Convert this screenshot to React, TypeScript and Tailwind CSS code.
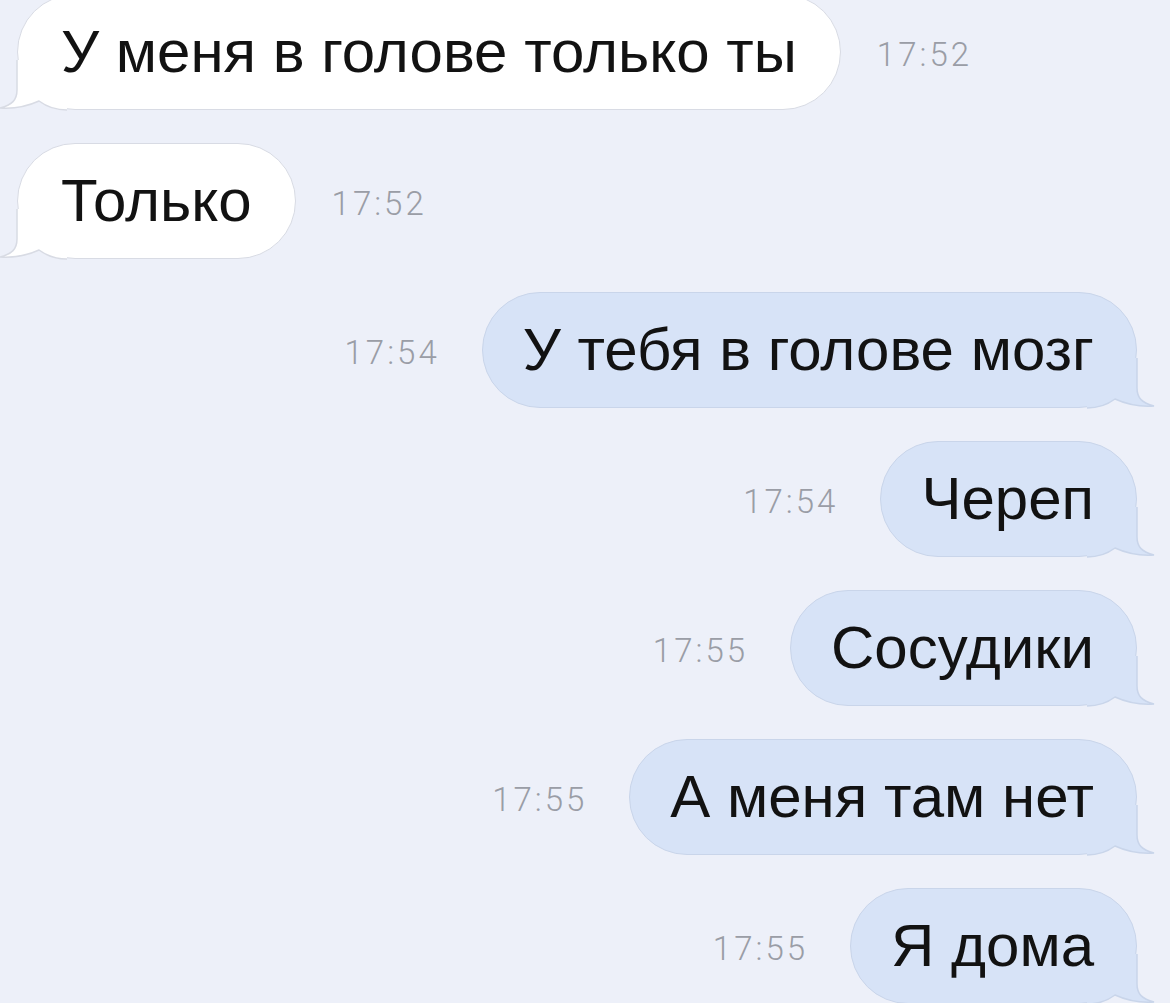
import React from "react";

type Side = "in" | "out";

interface Msg {
	side: Side;
	text: string;
	time: string;
}

const messages: Msg[] = [
	{ side: "in", text: "У меня в голове только ты", time: "17:52" },
	{ side: "in", text: "Только", time: "17:52" },
	{ side: "out", text: "У тебя в голове мозг", time: "17:54" },
	{ side: "out", text: "Череп", time: "17:54" },
	{ side: "out", text: "Сосудики", time: "17:55" },
	{ side: "out", text: "А меня там нет", time: "17:55" },
	{ side: "out", text: "Я дома", time: "17:55" },
];

export default function App() {
	return (
		<div className="h-[1003px] overflow-hidden bg-[#edf0f9] font-['Liberation_Sans',Arial,sans-serif]">
			<div className="-mt-[6px] flex flex-col gap-[33px] pl-[17px] pr-[33px]">
				{messages.map((m, i) => (
					<Row key={i} msg={m} />
				))}
			</div>
		</div>
	);
}

function Row({ msg }: Readonly<{ msg: Msg }>) {
	if (msg.side === "in") {
		return (
			<div className="flex items-center gap-[36px]">
				<Bubble side="in" text={msg.text} />
				<Time value={msg.time} />
			</div>
		);
	}
	return (
		<div className="flex items-center justify-end gap-[42px]">
			<Time value={msg.time} />
			<Bubble side="out" text={msg.text} />
		</div>
	);
}

function Time({ value }: Readonly<{ value: string }>) {
	return <span className="pt-[4px] font-['Roboto',sans-serif] text-[33px] font-light leading-none tracking-[3px] text-[#9a9da6]">{value}</span>;
}

function Bubble({ side, text }: Readonly<{ side: Side; text: string }>) {
	const incoming = side === "in";
	return (
		<div
			className={
				incoming
					? "relative flex h-[116px] items-center rounded-[58px] border border-[#d8dbe4] bg-white px-[43px] text-[60px] leading-none text-[#121212]"
					: "relative flex h-[116px] items-center rounded-[58px] border border-[#c9d5ea] bg-[#d7e3f7] pl-[40px] pr-[42px] text-[60px] leading-none text-[#121212]"
			}
		>
			<Tail side={side} />
			<span className="relative whitespace-nowrap">{text}</span>
		</div>
	);
}

function Tail({ side }: Readonly<{ side: Side }>) {
	const incoming = side === "in";
	const fill = incoming ? "#ffffff" : "#d7e3f7";
	const stroke = incoming ? "#d8dbe4" : "#c9d5ea";
	const d = "M16,0 L16,30 C16,40 11,45 -1,48 C13,49 27,46 38,41 C46,47 54,50 66,50";
	return (
		<svg
			viewBox="0 0 66 50"
			width={66}
			height={50}
			className={incoming ? "absolute bottom-[-1px] left-[-17px] overflow-visible" : "absolute bottom-[-1px] right-[-17px] -scale-x-100 overflow-visible"}
		>
			<path d={`${d} L66,0 Z`} fill={fill} />
			<path d={d} fill="none" stroke={stroke} strokeWidth={1.5} />
		</svg>
	);
}
